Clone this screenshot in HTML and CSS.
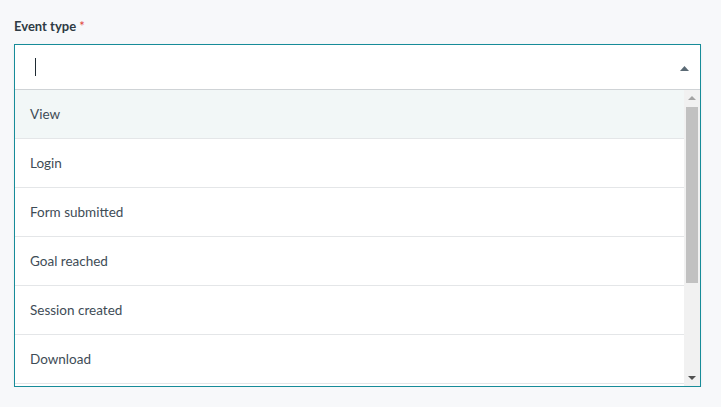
FILE: index.html
```html
<!DOCTYPE html>
<html>
<head>
<meta charset="utf-8">
<link rel="stylesheet" href="styles.css">
</head>
<body>
<div class="field">
  <div class="label">Event type <span class="req">*</span></div>
  <div class="select">
    <div class="input">
      <span class="caret"></span>
      <svg class="arrow" width="9" height="5" viewBox="0 0 9 5"><path d="M0 5 L4.5 0 L9 5 Z" fill="#5b6a75"/></svg>
    </div>
    <div class="menu">
      <div class="list">
        <div class="opt active">View</div>
        <div class="opt">Login</div>
        <div class="opt">Form submitted</div>
        <div class="opt">Goal reached</div>
        <div class="opt">Session created</div>
        <div class="opt">Download</div>
      </div>
      <div class="scrollbar">
        <svg class="sb-btn" width="16" height="14" viewBox="0 0 16 14"><path d="M4 10 L8 6 L12 10 Z" fill="#a3a3a3"/></svg>
        <div class="sb-track"><div class="sb-thumb"></div></div>
        <svg class="sb-btn" width="16" height="14" viewBox="0 0 16 14"><path d="M4 4 L8 8 L12 4 Z" fill="#505050"/></svg>
      </div>
    </div>
  </div>
</div>
</body>
</html>
```
FILE: styles.css
```css
html, body { margin: 0; padding: 0; }
body {
  background: #f7f8fa;
  font-family: Lato, "Open Sans", sans-serif;
  color: #3e4c56;
}
.field {
  padding: 16px 20px 0 14px;
  display: flex;
  flex-direction: column;
}
.label {
  font-size: 13px;
  font-weight: 700;
  color: #2f3b44;
  height: 28px;
  line-height: 20px;
}
.req { color: #e0453a; font-weight: 400; }
.select {
  width: 685px;
  height: 341px;
  border: 1px solid #178c99;
  background: #fff;
  display: flex;
  flex-direction: column;
  box-shadow: 0 1px 3px rgba(0,0,0,0.06);
}
.input {
  height: 44px;
  border-bottom: 1px solid #cfd3d6;
  display: flex;
  align-items: center;
  padding: 0 11px 0 20px;
  flex: none;
}
.caret {
  width: 1px;
  height: 18px;
  background: #1f2b33;
}
.arrow { margin-left: auto; margin-top: 2px; }
.menu {
  flex: 1;
  display: flex;
  overflow: hidden;
}
.list {
  flex: 1;
  display: flex;
  flex-direction: column;
}
.opt {
  height: 48px;
  flex: none;
  border-bottom: 1px solid #e4e6e8;
  display: flex;
  align-items: center;
  padding-left: 15px;
  font-size: 13.5px;
}
.opt.active { background: #f2f7f7; }
.scrollbar {
  width: 16px;
  background: #f1f1f1;
  display: flex;
  flex-direction: column;
  flex: none;
}
.sb-btn { flex: none; display: block; }
.sb-track {
  flex: 1;
  padding: 3px 2px 0 2px;
}
.sb-thumb {
  height: 176px;
  background: #c1c1c1;
}
```
